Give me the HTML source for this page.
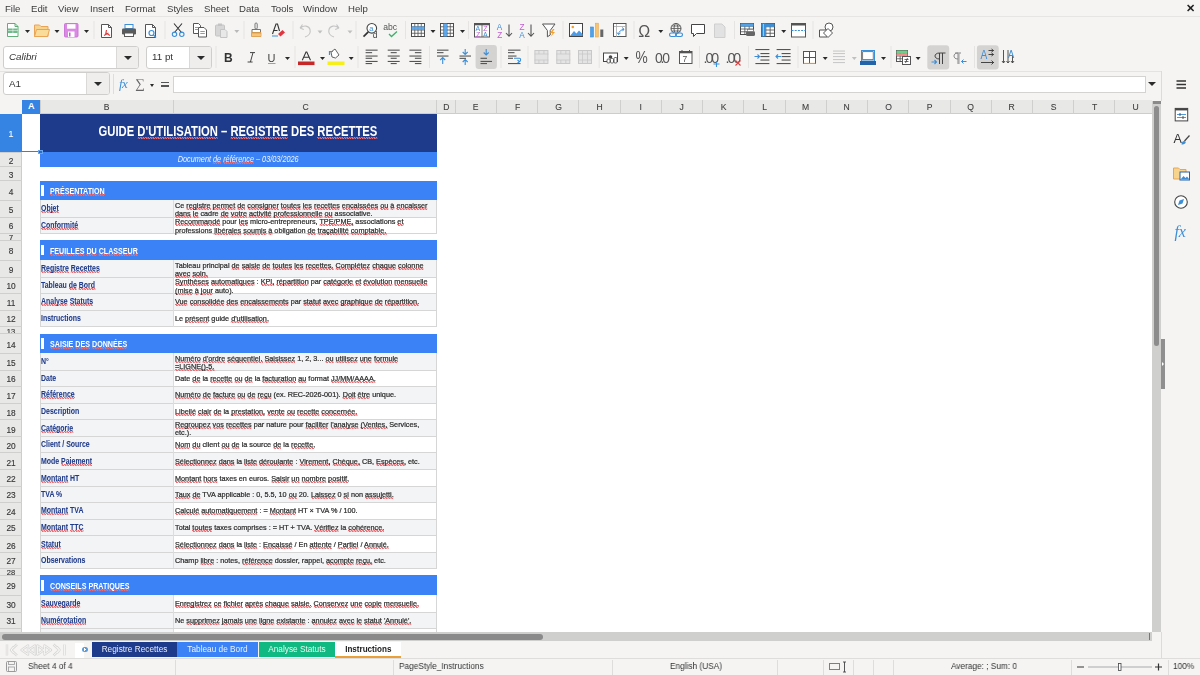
<!DOCTYPE html><html><head><meta charset="utf-8"><style>
*{margin:0;padding:0;box-sizing:border-box}
html,body{width:1200px;height:675px;overflow:hidden;background:#f5f4f3;font-family:"Liberation Sans",sans-serif;position:relative}
.a{position:absolute}
.t{position:absolute;white-space:nowrap;line-height:1;will-change:transform}
.menu{font-size:9.6px;color:#3b3b3b;top:4px}
.sep{position:absolute;width:1px;background:#dedddc}
.box{position:absolute;background:#fff;border:1px solid #cfcecd;border-radius:3px}
u{text-decoration:none;background-image:linear-gradient(45deg,transparent 38%,#ec6a70 38%,#ec6a70 62%,transparent 62%);background-size:3px 2px;background-repeat:repeat-x;background-position:0 100%}
.lab{color:#1e3a8a;font-size:8.2px;font-weight:bold;-webkit-text-stroke:0.05px #1e3a8a}
.lab span,.desc span{display:inline-block;transform-origin:0 0}
.lab span{transform:scaleX(0.85)}
.desc{color:#2a2a2a;font-size:7.7px;-webkit-text-stroke:0.22px #2a2a2a}
.desc span{transform:scaleX(0.945)}
.dd{position:absolute;width:0;height:0;border-left:3.5px solid transparent;border-right:3.5px solid transparent;border-top:4px solid #2b2b2b}
</style></head><body>
<div class="t menu" style="left:5.0px">File</div>
<div class="t menu" style="left:31.2px">Edit</div>
<div class="t menu" style="left:58.2px">View</div>
<div class="t menu" style="left:90.3px">Insert</div>
<div class="t menu" style="left:125.3px">Format</div>
<div class="t menu" style="left:166.7px">Styles</div>
<div class="t menu" style="left:203.7px">Sheet</div>
<div class="t menu" style="left:239.2px">Data</div>
<div class="t menu" style="left:270.7px">Tools</div>
<div class="t menu" style="left:302.8px">Window</div>
<div class="t menu" style="left:347.8px">Help</div>
<div class="a" style="left:0;top:16px;width:1200px;height:1px;background:#e6e5e4"></div>
<div class="t" style="left:1186px;top:3px;font-size:11px;color:#222;font-weight:bold">&#x2715;</div>
<div class="a" style="left:22px;top:113.6px;width:1130px;height:518.4px;background:#fff"></div>
<div class="a" style="left:22px;top:100px;width:1130px;height:13.6px;background:#e8e8e7;border-bottom:1px solid #cdcdcc"></div>
<div class="a" style="left:22px;top:100px;width:18.299999999999997px;height:13.6px;background:#3584e4;color:#fff;font-size:9px;font-weight:bold;text-align:center;line-height:13.6px">A</div>
<div class="a" style="left:40.3px;top:100px;width:133.2px;height:13.6px;color:#404040;font-size:8.6px;text-align:center;line-height:14.1px;will-change:transform;-webkit-text-stroke:0.1px #404040">B</div>
<div class="a" style="left:39.8px;top:100px;width:1px;height:13.6px;background:#cfcfce"></div>
<div class="a" style="left:173.5px;top:100px;width:263.2px;height:13.6px;color:#404040;font-size:8.6px;text-align:center;line-height:14.1px;will-change:transform;-webkit-text-stroke:0.1px #404040">C</div>
<div class="a" style="left:173.0px;top:100px;width:1px;height:13.6px;background:#cfcfce"></div>
<div class="a" style="left:436.7px;top:100px;width:18.600000000000023px;height:13.6px;color:#404040;font-size:8.6px;text-align:center;line-height:14.1px;will-change:transform;-webkit-text-stroke:0.1px #404040">D</div>
<div class="a" style="left:436.2px;top:100px;width:1px;height:13.6px;background:#cfcfce"></div>
<div class="a" style="left:455.3px;top:100px;width:41.23000000000002px;height:13.6px;color:#404040;font-size:8.6px;text-align:center;line-height:14.1px;will-change:transform;-webkit-text-stroke:0.1px #404040">E</div>
<div class="a" style="left:454.8px;top:100px;width:1px;height:13.6px;background:#cfcfce"></div>
<div class="a" style="left:496.53000000000003px;top:100px;width:41.22999999999996px;height:13.6px;color:#404040;font-size:8.6px;text-align:center;line-height:14.1px;will-change:transform;-webkit-text-stroke:0.1px #404040">F</div>
<div class="a" style="left:496.03000000000003px;top:100px;width:1px;height:13.6px;background:#cfcfce"></div>
<div class="a" style="left:537.76px;top:100px;width:41.23000000000002px;height:13.6px;color:#404040;font-size:8.6px;text-align:center;line-height:14.1px;will-change:transform;-webkit-text-stroke:0.1px #404040">G</div>
<div class="a" style="left:537.26px;top:100px;width:1px;height:13.6px;background:#cfcfce"></div>
<div class="a" style="left:578.99px;top:100px;width:41.23000000000002px;height:13.6px;color:#404040;font-size:8.6px;text-align:center;line-height:14.1px;will-change:transform;-webkit-text-stroke:0.1px #404040">H</div>
<div class="a" style="left:578.49px;top:100px;width:1px;height:13.6px;background:#cfcfce"></div>
<div class="a" style="left:620.22px;top:100px;width:41.23000000000002px;height:13.6px;color:#404040;font-size:8.6px;text-align:center;line-height:14.1px;will-change:transform;-webkit-text-stroke:0.1px #404040">I</div>
<div class="a" style="left:619.72px;top:100px;width:1px;height:13.6px;background:#cfcfce"></div>
<div class="a" style="left:661.45px;top:100px;width:41.23000000000002px;height:13.6px;color:#404040;font-size:8.6px;text-align:center;line-height:14.1px;will-change:transform;-webkit-text-stroke:0.1px #404040">J</div>
<div class="a" style="left:660.95px;top:100px;width:1px;height:13.6px;background:#cfcfce"></div>
<div class="a" style="left:702.6800000000001px;top:100px;width:41.23000000000002px;height:13.6px;color:#404040;font-size:8.6px;text-align:center;line-height:14.1px;will-change:transform;-webkit-text-stroke:0.1px #404040">K</div>
<div class="a" style="left:702.1800000000001px;top:100px;width:1px;height:13.6px;background:#cfcfce"></div>
<div class="a" style="left:743.9100000000001px;top:100px;width:41.23000000000002px;height:13.6px;color:#404040;font-size:8.6px;text-align:center;line-height:14.1px;will-change:transform;-webkit-text-stroke:0.1px #404040">L</div>
<div class="a" style="left:743.4100000000001px;top:100px;width:1px;height:13.6px;background:#cfcfce"></div>
<div class="a" style="left:785.1400000000001px;top:100px;width:41.23000000000002px;height:13.6px;color:#404040;font-size:8.6px;text-align:center;line-height:14.1px;will-change:transform;-webkit-text-stroke:0.1px #404040">M</div>
<div class="a" style="left:784.6400000000001px;top:100px;width:1px;height:13.6px;background:#cfcfce"></div>
<div class="a" style="left:826.3700000000001px;top:100px;width:41.23000000000002px;height:13.6px;color:#404040;font-size:8.6px;text-align:center;line-height:14.1px;will-change:transform;-webkit-text-stroke:0.1px #404040">N</div>
<div class="a" style="left:825.8700000000001px;top:100px;width:1px;height:13.6px;background:#cfcfce"></div>
<div class="a" style="left:867.6000000000001px;top:100px;width:41.23000000000002px;height:13.6px;color:#404040;font-size:8.6px;text-align:center;line-height:14.1px;will-change:transform;-webkit-text-stroke:0.1px #404040">O</div>
<div class="a" style="left:867.1000000000001px;top:100px;width:1px;height:13.6px;background:#cfcfce"></div>
<div class="a" style="left:908.8300000000002px;top:100px;width:41.23000000000002px;height:13.6px;color:#404040;font-size:8.6px;text-align:center;line-height:14.1px;will-change:transform;-webkit-text-stroke:0.1px #404040">P</div>
<div class="a" style="left:908.3300000000002px;top:100px;width:1px;height:13.6px;background:#cfcfce"></div>
<div class="a" style="left:950.0600000000002px;top:100px;width:41.23000000000002px;height:13.6px;color:#404040;font-size:8.6px;text-align:center;line-height:14.1px;will-change:transform;-webkit-text-stroke:0.1px #404040">Q</div>
<div class="a" style="left:949.5600000000002px;top:100px;width:1px;height:13.6px;background:#cfcfce"></div>
<div class="a" style="left:991.2900000000002px;top:100px;width:41.23000000000002px;height:13.6px;color:#404040;font-size:8.6px;text-align:center;line-height:14.1px;will-change:transform;-webkit-text-stroke:0.1px #404040">R</div>
<div class="a" style="left:990.7900000000002px;top:100px;width:1px;height:13.6px;background:#cfcfce"></div>
<div class="a" style="left:1032.5200000000002px;top:100px;width:41.23000000000002px;height:13.6px;color:#404040;font-size:8.6px;text-align:center;line-height:14.1px;will-change:transform;-webkit-text-stroke:0.1px #404040">S</div>
<div class="a" style="left:1032.0200000000002px;top:100px;width:1px;height:13.6px;background:#cfcfce"></div>
<div class="a" style="left:1073.7500000000002px;top:100px;width:41.23000000000002px;height:13.6px;color:#404040;font-size:8.6px;text-align:center;line-height:14.1px;will-change:transform;-webkit-text-stroke:0.1px #404040">T</div>
<div class="a" style="left:1073.2500000000002px;top:100px;width:1px;height:13.6px;background:#cfcfce"></div>
<div class="a" style="left:1114.9800000000002px;top:100px;width:41.23000000000002px;height:13.6px;color:#404040;font-size:8.6px;text-align:center;line-height:14.1px;will-change:transform;-webkit-text-stroke:0.1px #404040">U</div>
<div class="a" style="left:1114.4800000000002px;top:100px;width:1px;height:13.6px;background:#cfcfce"></div>
<div class="a" style="left:0;top:113.6px;width:22px;height:518.4px;background:#e8e8e7;border-right:1px solid #cdcdcc"></div>
<div class="a" style="left:0;top:113.6px;width:22px;height:38.400000000000006px;background:#3584e4;color:#fff;font-size:9.6px;text-align:center;line-height:39.900000000000006px;will-change:transform">1</div>
<div class="a" style="left:0;top:152px;width:22px;height:1px;background:#cfcfce"></div>
<div class="a" style="left:0;top:152.0px;width:22px;height:14.800000000000011px;color:#383838;font-size:8.3px;text-align:center;line-height:18.20000000000001px;overflow:hidden;will-change:transform;-webkit-text-stroke:0.15px #383838">2</div>
<div class="a" style="left:0;top:166px;width:22px;height:1px;background:#cfcfce"></div>
<div class="a" style="left:0;top:166.8px;width:22px;height:13.699999999999989px;color:#383838;font-size:8.3px;text-align:center;line-height:17.099999999999987px;overflow:hidden;will-change:transform;-webkit-text-stroke:0.15px #383838">3</div>
<div class="a" style="left:0;top:180px;width:22px;height:1px;background:#cfcfce"></div>
<div class="a" style="left:0;top:180.5px;width:22px;height:19.80000000000001px;color:#383838;font-size:8.3px;text-align:center;line-height:23.20000000000001px;overflow:hidden;will-change:transform;-webkit-text-stroke:0.15px #383838">4</div>
<div class="a" style="left:0;top:200px;width:22px;height:1px;background:#cfcfce"></div>
<div class="a" style="left:0;top:200.3px;width:22px;height:16.69999999999999px;color:#383838;font-size:8.3px;text-align:center;line-height:20.099999999999987px;overflow:hidden;will-change:transform;-webkit-text-stroke:0.15px #383838">5</div>
<div class="a" style="left:0;top:217px;width:22px;height:1px;background:#cfcfce"></div>
<div class="a" style="left:0;top:217px;width:22px;height:16.30000000000001px;color:#383838;font-size:8.3px;text-align:center;line-height:19.70000000000001px;overflow:hidden;will-change:transform;-webkit-text-stroke:0.15px #383838">6</div>
<div class="a" style="left:0;top:233px;width:22px;height:1px;background:#cfcfce"></div>
<div class="a" style="left:0;top:233.3px;width:22px;height:7.0px;color:#383838;font-size:7.5px;text-align:center;line-height:10.4px;overflow:hidden;will-change:transform;-webkit-text-stroke:0.15px #383838">7</div>
<div class="a" style="left:0;top:240px;width:22px;height:1px;background:#cfcfce"></div>
<div class="a" style="left:0;top:240.3px;width:22px;height:20.0px;color:#383838;font-size:8.3px;text-align:center;line-height:23.4px;overflow:hidden;will-change:transform;-webkit-text-stroke:0.15px #383838">8</div>
<div class="a" style="left:0;top:260px;width:22px;height:1px;background:#cfcfce"></div>
<div class="a" style="left:0;top:260.3px;width:22px;height:16.69999999999999px;color:#383838;font-size:8.3px;text-align:center;line-height:20.099999999999987px;overflow:hidden;will-change:transform;-webkit-text-stroke:0.15px #383838">9</div>
<div class="a" style="left:0;top:277px;width:22px;height:1px;background:#cfcfce"></div>
<div class="a" style="left:0;top:277px;width:22px;height:16.30000000000001px;color:#383838;font-size:8.3px;text-align:center;line-height:19.70000000000001px;overflow:hidden;will-change:transform;-webkit-text-stroke:0.15px #383838">10</div>
<div class="a" style="left:0;top:293px;width:22px;height:1px;background:#cfcfce"></div>
<div class="a" style="left:0;top:293.3px;width:22px;height:17.0px;color:#383838;font-size:8.3px;text-align:center;line-height:20.4px;overflow:hidden;will-change:transform;-webkit-text-stroke:0.15px #383838">11</div>
<div class="a" style="left:0;top:310px;width:22px;height:1px;background:#cfcfce"></div>
<div class="a" style="left:0;top:310.3px;width:22px;height:16.399999999999977px;color:#383838;font-size:8.3px;text-align:center;line-height:19.799999999999976px;overflow:hidden;will-change:transform;-webkit-text-stroke:0.15px #383838">12</div>
<div class="a" style="left:0;top:326px;width:22px;height:1px;background:#cfcfce"></div>
<div class="a" style="left:0;top:326.7px;width:22px;height:6.800000000000011px;color:#383838;font-size:7.5px;text-align:center;line-height:10.200000000000012px;overflow:hidden;will-change:transform;-webkit-text-stroke:0.15px #383838">13</div>
<div class="a" style="left:0;top:333px;width:22px;height:1px;background:#cfcfce"></div>
<div class="a" style="left:0;top:333.5px;width:22px;height:19.899999999999977px;color:#383838;font-size:8.3px;text-align:center;line-height:23.299999999999976px;overflow:hidden;will-change:transform;-webkit-text-stroke:0.15px #383838">14</div>
<div class="a" style="left:0;top:353px;width:22px;height:1px;background:#cfcfce"></div>
<div class="a" style="left:0;top:353.4px;width:22px;height:16.80000000000001px;color:#383838;font-size:8.3px;text-align:center;line-height:20.20000000000001px;overflow:hidden;will-change:transform;-webkit-text-stroke:0.15px #383838">15</div>
<div class="a" style="left:0;top:370px;width:22px;height:1px;background:#cfcfce"></div>
<div class="a" style="left:0;top:370.2px;width:22px;height:16.30000000000001px;color:#383838;font-size:8.3px;text-align:center;line-height:19.70000000000001px;overflow:hidden;will-change:transform;-webkit-text-stroke:0.15px #383838">16</div>
<div class="a" style="left:0;top:386px;width:22px;height:1px;background:#cfcfce"></div>
<div class="a" style="left:0;top:386.5px;width:22px;height:16.5px;color:#383838;font-size:8.3px;text-align:center;line-height:19.9px;overflow:hidden;will-change:transform;-webkit-text-stroke:0.15px #383838">17</div>
<div class="a" style="left:0;top:403px;width:22px;height:1px;background:#cfcfce"></div>
<div class="a" style="left:0;top:403px;width:22px;height:16.600000000000023px;color:#383838;font-size:8.3px;text-align:center;line-height:20.00000000000002px;overflow:hidden;will-change:transform;-webkit-text-stroke:0.15px #383838">18</div>
<div class="a" style="left:0;top:419px;width:22px;height:1px;background:#cfcfce"></div>
<div class="a" style="left:0;top:419.6px;width:22px;height:16.899999999999977px;color:#383838;font-size:8.3px;text-align:center;line-height:20.299999999999976px;overflow:hidden;will-change:transform;-webkit-text-stroke:0.15px #383838">19</div>
<div class="a" style="left:0;top:436px;width:22px;height:1px;background:#cfcfce"></div>
<div class="a" style="left:0;top:436.5px;width:22px;height:16.30000000000001px;color:#383838;font-size:8.3px;text-align:center;line-height:19.70000000000001px;overflow:hidden;will-change:transform;-webkit-text-stroke:0.15px #383838">20</div>
<div class="a" style="left:0;top:452px;width:22px;height:1px;background:#cfcfce"></div>
<div class="a" style="left:0;top:452.8px;width:22px;height:16.899999999999977px;color:#383838;font-size:8.3px;text-align:center;line-height:20.299999999999976px;overflow:hidden;will-change:transform;-webkit-text-stroke:0.15px #383838">21</div>
<div class="a" style="left:0;top:469px;width:22px;height:1px;background:#cfcfce"></div>
<div class="a" style="left:0;top:469.7px;width:22px;height:16.5px;color:#383838;font-size:8.3px;text-align:center;line-height:19.9px;overflow:hidden;will-change:transform;-webkit-text-stroke:0.15px #383838">22</div>
<div class="a" style="left:0;top:486px;width:22px;height:1px;background:#cfcfce"></div>
<div class="a" style="left:0;top:486.2px;width:22px;height:16.400000000000034px;color:#383838;font-size:8.3px;text-align:center;line-height:19.800000000000033px;overflow:hidden;will-change:transform;-webkit-text-stroke:0.15px #383838">23</div>
<div class="a" style="left:0;top:502px;width:22px;height:1px;background:#cfcfce"></div>
<div class="a" style="left:0;top:502.6px;width:22px;height:16.5px;color:#383838;font-size:8.3px;text-align:center;line-height:19.9px;overflow:hidden;will-change:transform;-webkit-text-stroke:0.15px #383838">24</div>
<div class="a" style="left:0;top:519px;width:22px;height:1px;background:#cfcfce"></div>
<div class="a" style="left:0;top:519.1px;width:22px;height:16.5px;color:#383838;font-size:8.3px;text-align:center;line-height:19.9px;overflow:hidden;will-change:transform;-webkit-text-stroke:0.15px #383838">25</div>
<div class="a" style="left:0;top:535px;width:22px;height:1px;background:#cfcfce"></div>
<div class="a" style="left:0;top:535.6px;width:22px;height:16.600000000000023px;color:#383838;font-size:8.3px;text-align:center;line-height:20.00000000000002px;overflow:hidden;will-change:transform;-webkit-text-stroke:0.15px #383838">26</div>
<div class="a" style="left:0;top:552px;width:22px;height:1px;background:#cfcfce"></div>
<div class="a" style="left:0;top:552.2px;width:22px;height:16.199999999999932px;color:#383838;font-size:8.3px;text-align:center;line-height:19.59999999999993px;overflow:hidden;will-change:transform;-webkit-text-stroke:0.15px #383838">27</div>
<div class="a" style="left:0;top:568px;width:22px;height:1px;background:#cfcfce"></div>
<div class="a" style="left:0;top:568.4px;width:22px;height:7.0px;color:#383838;font-size:7.5px;text-align:center;line-height:10.4px;overflow:hidden;will-change:transform;-webkit-text-stroke:0.15px #383838">28</div>
<div class="a" style="left:0;top:575px;width:22px;height:1px;background:#cfcfce"></div>
<div class="a" style="left:0;top:575.4px;width:22px;height:19.899999999999977px;color:#383838;font-size:8.3px;text-align:center;line-height:23.299999999999976px;overflow:hidden;will-change:transform;-webkit-text-stroke:0.15px #383838">29</div>
<div class="a" style="left:0;top:595px;width:22px;height:1px;background:#cfcfce"></div>
<div class="a" style="left:0;top:595.3px;width:22px;height:16.90000000000009px;color:#383838;font-size:8.3px;text-align:center;line-height:20.30000000000009px;overflow:hidden;will-change:transform;-webkit-text-stroke:0.15px #383838">30</div>
<div class="a" style="left:0;top:612px;width:22px;height:1px;background:#cfcfce"></div>
<div class="a" style="left:0;top:612.2px;width:22px;height:16.299999999999955px;color:#383838;font-size:8.3px;text-align:center;line-height:19.699999999999953px;overflow:hidden;will-change:transform;-webkit-text-stroke:0.15px #383838">31</div>
<div class="a" style="left:0;top:628px;width:22px;height:1px;background:#cfcfce"></div>
<div class="a" style="left:0;top:628.5px;width:22px;height:16.5px;color:#383838;font-size:8.3px;text-align:center;line-height:19.9px;overflow:hidden;will-change:transform;-webkit-text-stroke:0.15px #383838">32</div>
<div class="a" style="left:0;top:645px;width:22px;height:1px;background:#cfcfce"></div>
<div class="a" style="left:40.3px;top:113.6px;width:396.4px;height:39.00000000000001px;background:#1e3a8a"></div>
<div class="t" style="left:40.3px;width:396.4px;top:125.19999999999999px;text-align:center;color:#fff;font-size:13.8px;font-weight:bold"><span style="display:inline-block;transform:scaleX(0.815)">GUIDE <u>D&#39;UTILISATION</u> – <u>REGISTRE</u> DES <u>RECETTES</u></span></div>
<div class="a" style="left:40.3px;top:152.0px;width:396.4px;height:15.100000000000012px;background:#3b82f6"></div>
<div class="t" style="left:40.3px;width:396.4px;top:153.9px;text-align:center;color:#eef3ff;font-size:9.8px;font-style:italic"><span style="display:inline-block;transform:scaleX(0.745)">Document <u>de</u> <u>référence</u> – 03/03/2026</span></div>
<div class="a" style="left:39.599999999999994px;top:180.5px;width:397.09999999999997px;height:19.80000000000001px;background:#3b82f6"></div>
<div class="a" style="left:41.3px;top:185.1px;width:3.1px;height:10.6px;background:#fff"></div>
<div class="t" style="left:50px;top:187.1px;color:#fff;font-size:8.7px;font-weight:bold"><span style="display:inline-block;transform:scaleX(0.82);transform-origin:0 0"><u>PRÉSENTATION</u></span></div>
<div class="a" style="left:39.599999999999994px;top:240.3px;width:397.09999999999997px;height:20.0px;background:#3b82f6"></div>
<div class="a" style="left:41.3px;top:244.9px;width:3.1px;height:10.6px;background:#fff"></div>
<div class="t" style="left:50px;top:246.9px;color:#fff;font-size:8.7px;font-weight:bold"><span style="display:inline-block;transform:scaleX(0.82);transform-origin:0 0"><u>FEUILLES</u> <u>DU</u> <u>CLASSEUR</u></span></div>
<div class="a" style="left:39.599999999999994px;top:333.5px;width:397.09999999999997px;height:19.899999999999977px;background:#3b82f6"></div>
<div class="a" style="left:41.3px;top:338.1px;width:3.1px;height:10.6px;background:#fff"></div>
<div class="t" style="left:50px;top:340.1px;color:#fff;font-size:8.7px;font-weight:bold"><span style="display:inline-block;transform:scaleX(0.82);transform-origin:0 0"><u>SAISIE</u> <u>DES</u> <u>DONNÉES</u></span></div>
<div class="a" style="left:39.599999999999994px;top:575.4px;width:397.09999999999997px;height:19.899999999999977px;background:#3b82f6"></div>
<div class="a" style="left:41.3px;top:580.0px;width:3.1px;height:10.6px;background:#fff"></div>
<div class="t" style="left:50px;top:582.0px;color:#fff;font-size:8.7px;font-weight:bold"><span style="display:inline-block;transform:scaleX(0.82);transform-origin:0 0"><u>CONSEILS</u> <u>PRATIQUES</u></span></div>
<div class="a" style="left:39.599999999999994px;top:200.3px;width:133.89999999999998px;height:16.69999999999999px;background:#f3f4f6"></div>
<div class="a" style="left:173.5px;top:200.3px;width:263.2px;height:16.69999999999999px;background:#f3f4f6"></div>
<div class="a" style="left:39.599999999999994px;top:217px;width:133.89999999999998px;height:16.30000000000001px;background:#f3f4f6"></div>
<div class="a" style="left:173.5px;top:217px;width:263.2px;height:16.30000000000001px;background:#ffffff"></div>
<div class="a" style="left:39.599999999999994px;top:260.3px;width:133.89999999999998px;height:16.69999999999999px;background:#f3f4f6"></div>
<div class="a" style="left:173.5px;top:260.3px;width:263.2px;height:16.69999999999999px;background:#f3f4f6"></div>
<div class="a" style="left:39.599999999999994px;top:277px;width:133.89999999999998px;height:16.30000000000001px;background:#f3f4f6"></div>
<div class="a" style="left:173.5px;top:277px;width:263.2px;height:16.30000000000001px;background:#ffffff"></div>
<div class="a" style="left:39.599999999999994px;top:293.3px;width:133.89999999999998px;height:17.0px;background:#f3f4f6"></div>
<div class="a" style="left:173.5px;top:293.3px;width:263.2px;height:17.0px;background:#f3f4f6"></div>
<div class="a" style="left:39.599999999999994px;top:310.3px;width:133.89999999999998px;height:16.399999999999977px;background:#f3f4f6"></div>
<div class="a" style="left:173.5px;top:310.3px;width:263.2px;height:16.399999999999977px;background:#ffffff"></div>
<div class="a" style="left:39.599999999999994px;top:353.4px;width:133.89999999999998px;height:16.80000000000001px;background:#f3f4f6"></div>
<div class="a" style="left:173.5px;top:353.4px;width:263.2px;height:16.80000000000001px;background:#f3f4f6"></div>
<div class="a" style="left:39.599999999999994px;top:370.2px;width:133.89999999999998px;height:16.30000000000001px;background:#f3f4f6"></div>
<div class="a" style="left:173.5px;top:370.2px;width:263.2px;height:16.30000000000001px;background:#ffffff"></div>
<div class="a" style="left:39.599999999999994px;top:386.5px;width:133.89999999999998px;height:16.5px;background:#f3f4f6"></div>
<div class="a" style="left:173.5px;top:386.5px;width:263.2px;height:16.5px;background:#f3f4f6"></div>
<div class="a" style="left:39.599999999999994px;top:403px;width:133.89999999999998px;height:16.600000000000023px;background:#f3f4f6"></div>
<div class="a" style="left:173.5px;top:403px;width:263.2px;height:16.600000000000023px;background:#ffffff"></div>
<div class="a" style="left:39.599999999999994px;top:419.6px;width:133.89999999999998px;height:16.899999999999977px;background:#f3f4f6"></div>
<div class="a" style="left:173.5px;top:419.6px;width:263.2px;height:16.899999999999977px;background:#f3f4f6"></div>
<div class="a" style="left:39.599999999999994px;top:436.5px;width:133.89999999999998px;height:16.30000000000001px;background:#f3f4f6"></div>
<div class="a" style="left:173.5px;top:436.5px;width:263.2px;height:16.30000000000001px;background:#ffffff"></div>
<div class="a" style="left:39.599999999999994px;top:452.8px;width:133.89999999999998px;height:16.899999999999977px;background:#f3f4f6"></div>
<div class="a" style="left:173.5px;top:452.8px;width:263.2px;height:16.899999999999977px;background:#f3f4f6"></div>
<div class="a" style="left:39.599999999999994px;top:469.7px;width:133.89999999999998px;height:16.5px;background:#f3f4f6"></div>
<div class="a" style="left:173.5px;top:469.7px;width:263.2px;height:16.5px;background:#ffffff"></div>
<div class="a" style="left:39.599999999999994px;top:486.2px;width:133.89999999999998px;height:16.400000000000034px;background:#f3f4f6"></div>
<div class="a" style="left:173.5px;top:486.2px;width:263.2px;height:16.400000000000034px;background:#f3f4f6"></div>
<div class="a" style="left:39.599999999999994px;top:502.6px;width:133.89999999999998px;height:16.5px;background:#f3f4f6"></div>
<div class="a" style="left:173.5px;top:502.6px;width:263.2px;height:16.5px;background:#ffffff"></div>
<div class="a" style="left:39.599999999999994px;top:519.1px;width:133.89999999999998px;height:16.5px;background:#f3f4f6"></div>
<div class="a" style="left:173.5px;top:519.1px;width:263.2px;height:16.5px;background:#f3f4f6"></div>
<div class="a" style="left:39.599999999999994px;top:535.6px;width:133.89999999999998px;height:16.600000000000023px;background:#f3f4f6"></div>
<div class="a" style="left:173.5px;top:535.6px;width:263.2px;height:16.600000000000023px;background:#ffffff"></div>
<div class="a" style="left:39.599999999999994px;top:552.2px;width:133.89999999999998px;height:16.199999999999932px;background:#f3f4f6"></div>
<div class="a" style="left:173.5px;top:552.2px;width:263.2px;height:16.199999999999932px;background:#f3f4f6"></div>
<div class="a" style="left:39.599999999999994px;top:595.3px;width:133.89999999999998px;height:16.90000000000009px;background:#f3f4f6"></div>
<div class="a" style="left:173.5px;top:595.3px;width:263.2px;height:16.90000000000009px;background:#ffffff"></div>
<div class="a" style="left:39.599999999999994px;top:612.2px;width:133.89999999999998px;height:16.299999999999955px;background:#f3f4f6"></div>
<div class="a" style="left:173.5px;top:612.2px;width:263.2px;height:16.299999999999955px;background:#f3f4f6"></div>
<div class="a" style="left:39.599999999999994px;top:628.5px;width:133.89999999999998px;height:16.5px;background:#f3f4f6"></div>
<div class="a" style="left:173.5px;top:628.5px;width:263.2px;height:16.5px;background:#ffffff"></div>
<div class="a" style="left:39.8px;top:217px;width:396.9px;height:1px;background:#d6d6d6"></div>
<div class="a" style="left:39.599999999999994px;top:200.3px;width:1px;height:16.69999999999999px;background:#d6d6d6"></div>
<div class="a" style="left:173.0px;top:200.3px;width:1px;height:16.69999999999999px;background:#dddddd"></div>
<div class="a" style="left:436.2px;top:200.3px;width:1px;height:16.69999999999999px;background:#d6d6d6"></div>
<div class="a" style="left:39.8px;top:233px;width:396.9px;height:1px;background:#d6d6d6"></div>
<div class="a" style="left:39.599999999999994px;top:217px;width:1px;height:16.30000000000001px;background:#d6d6d6"></div>
<div class="a" style="left:173.0px;top:217px;width:1px;height:16.30000000000001px;background:#dddddd"></div>
<div class="a" style="left:436.2px;top:217px;width:1px;height:16.30000000000001px;background:#d6d6d6"></div>
<div class="a" style="left:39.8px;top:277px;width:396.9px;height:1px;background:#d6d6d6"></div>
<div class="a" style="left:39.599999999999994px;top:260.3px;width:1px;height:16.69999999999999px;background:#d6d6d6"></div>
<div class="a" style="left:173.0px;top:260.3px;width:1px;height:16.69999999999999px;background:#dddddd"></div>
<div class="a" style="left:436.2px;top:260.3px;width:1px;height:16.69999999999999px;background:#d6d6d6"></div>
<div class="a" style="left:39.8px;top:293px;width:396.9px;height:1px;background:#d6d6d6"></div>
<div class="a" style="left:39.599999999999994px;top:277px;width:1px;height:16.30000000000001px;background:#d6d6d6"></div>
<div class="a" style="left:173.0px;top:277px;width:1px;height:16.30000000000001px;background:#dddddd"></div>
<div class="a" style="left:436.2px;top:277px;width:1px;height:16.30000000000001px;background:#d6d6d6"></div>
<div class="a" style="left:39.8px;top:310px;width:396.9px;height:1px;background:#d6d6d6"></div>
<div class="a" style="left:39.599999999999994px;top:293.3px;width:1px;height:17.0px;background:#d6d6d6"></div>
<div class="a" style="left:173.0px;top:293.3px;width:1px;height:17.0px;background:#dddddd"></div>
<div class="a" style="left:436.2px;top:293.3px;width:1px;height:17.0px;background:#d6d6d6"></div>
<div class="a" style="left:39.8px;top:326px;width:396.9px;height:1px;background:#d6d6d6"></div>
<div class="a" style="left:39.599999999999994px;top:310.3px;width:1px;height:16.399999999999977px;background:#d6d6d6"></div>
<div class="a" style="left:173.0px;top:310.3px;width:1px;height:16.399999999999977px;background:#dddddd"></div>
<div class="a" style="left:436.2px;top:310.3px;width:1px;height:16.399999999999977px;background:#d6d6d6"></div>
<div class="a" style="left:39.8px;top:370px;width:396.9px;height:1px;background:#d6d6d6"></div>
<div class="a" style="left:39.599999999999994px;top:353.4px;width:1px;height:16.80000000000001px;background:#d6d6d6"></div>
<div class="a" style="left:173.0px;top:353.4px;width:1px;height:16.80000000000001px;background:#dddddd"></div>
<div class="a" style="left:436.2px;top:353.4px;width:1px;height:16.80000000000001px;background:#d6d6d6"></div>
<div class="a" style="left:39.8px;top:386px;width:396.9px;height:1px;background:#d6d6d6"></div>
<div class="a" style="left:39.599999999999994px;top:370.2px;width:1px;height:16.30000000000001px;background:#d6d6d6"></div>
<div class="a" style="left:173.0px;top:370.2px;width:1px;height:16.30000000000001px;background:#dddddd"></div>
<div class="a" style="left:436.2px;top:370.2px;width:1px;height:16.30000000000001px;background:#d6d6d6"></div>
<div class="a" style="left:39.8px;top:403px;width:396.9px;height:1px;background:#d6d6d6"></div>
<div class="a" style="left:39.599999999999994px;top:386.5px;width:1px;height:16.5px;background:#d6d6d6"></div>
<div class="a" style="left:173.0px;top:386.5px;width:1px;height:16.5px;background:#dddddd"></div>
<div class="a" style="left:436.2px;top:386.5px;width:1px;height:16.5px;background:#d6d6d6"></div>
<div class="a" style="left:39.8px;top:419px;width:396.9px;height:1px;background:#d6d6d6"></div>
<div class="a" style="left:39.599999999999994px;top:403px;width:1px;height:16.600000000000023px;background:#d6d6d6"></div>
<div class="a" style="left:173.0px;top:403px;width:1px;height:16.600000000000023px;background:#dddddd"></div>
<div class="a" style="left:436.2px;top:403px;width:1px;height:16.600000000000023px;background:#d6d6d6"></div>
<div class="a" style="left:39.8px;top:436px;width:396.9px;height:1px;background:#d6d6d6"></div>
<div class="a" style="left:39.599999999999994px;top:419.6px;width:1px;height:16.899999999999977px;background:#d6d6d6"></div>
<div class="a" style="left:173.0px;top:419.6px;width:1px;height:16.899999999999977px;background:#dddddd"></div>
<div class="a" style="left:436.2px;top:419.6px;width:1px;height:16.899999999999977px;background:#d6d6d6"></div>
<div class="a" style="left:39.8px;top:452px;width:396.9px;height:1px;background:#d6d6d6"></div>
<div class="a" style="left:39.599999999999994px;top:436.5px;width:1px;height:16.30000000000001px;background:#d6d6d6"></div>
<div class="a" style="left:173.0px;top:436.5px;width:1px;height:16.30000000000001px;background:#dddddd"></div>
<div class="a" style="left:436.2px;top:436.5px;width:1px;height:16.30000000000001px;background:#d6d6d6"></div>
<div class="a" style="left:39.8px;top:469px;width:396.9px;height:1px;background:#d6d6d6"></div>
<div class="a" style="left:39.599999999999994px;top:452.8px;width:1px;height:16.899999999999977px;background:#d6d6d6"></div>
<div class="a" style="left:173.0px;top:452.8px;width:1px;height:16.899999999999977px;background:#dddddd"></div>
<div class="a" style="left:436.2px;top:452.8px;width:1px;height:16.899999999999977px;background:#d6d6d6"></div>
<div class="a" style="left:39.8px;top:486px;width:396.9px;height:1px;background:#d6d6d6"></div>
<div class="a" style="left:39.599999999999994px;top:469.7px;width:1px;height:16.5px;background:#d6d6d6"></div>
<div class="a" style="left:173.0px;top:469.7px;width:1px;height:16.5px;background:#dddddd"></div>
<div class="a" style="left:436.2px;top:469.7px;width:1px;height:16.5px;background:#d6d6d6"></div>
<div class="a" style="left:39.8px;top:502px;width:396.9px;height:1px;background:#d6d6d6"></div>
<div class="a" style="left:39.599999999999994px;top:486.2px;width:1px;height:16.400000000000034px;background:#d6d6d6"></div>
<div class="a" style="left:173.0px;top:486.2px;width:1px;height:16.400000000000034px;background:#dddddd"></div>
<div class="a" style="left:436.2px;top:486.2px;width:1px;height:16.400000000000034px;background:#d6d6d6"></div>
<div class="a" style="left:39.8px;top:519px;width:396.9px;height:1px;background:#d6d6d6"></div>
<div class="a" style="left:39.599999999999994px;top:502.6px;width:1px;height:16.5px;background:#d6d6d6"></div>
<div class="a" style="left:173.0px;top:502.6px;width:1px;height:16.5px;background:#dddddd"></div>
<div class="a" style="left:436.2px;top:502.6px;width:1px;height:16.5px;background:#d6d6d6"></div>
<div class="a" style="left:39.8px;top:535px;width:396.9px;height:1px;background:#d6d6d6"></div>
<div class="a" style="left:39.599999999999994px;top:519.1px;width:1px;height:16.5px;background:#d6d6d6"></div>
<div class="a" style="left:173.0px;top:519.1px;width:1px;height:16.5px;background:#dddddd"></div>
<div class="a" style="left:436.2px;top:519.1px;width:1px;height:16.5px;background:#d6d6d6"></div>
<div class="a" style="left:39.8px;top:552px;width:396.9px;height:1px;background:#d6d6d6"></div>
<div class="a" style="left:39.599999999999994px;top:535.6px;width:1px;height:16.600000000000023px;background:#d6d6d6"></div>
<div class="a" style="left:173.0px;top:535.6px;width:1px;height:16.600000000000023px;background:#dddddd"></div>
<div class="a" style="left:436.2px;top:535.6px;width:1px;height:16.600000000000023px;background:#d6d6d6"></div>
<div class="a" style="left:39.8px;top:568px;width:396.9px;height:1px;background:#d6d6d6"></div>
<div class="a" style="left:39.599999999999994px;top:552.2px;width:1px;height:16.199999999999932px;background:#d6d6d6"></div>
<div class="a" style="left:173.0px;top:552.2px;width:1px;height:16.199999999999932px;background:#dddddd"></div>
<div class="a" style="left:436.2px;top:552.2px;width:1px;height:16.199999999999932px;background:#d6d6d6"></div>
<div class="a" style="left:39.8px;top:612px;width:396.9px;height:1px;background:#d6d6d6"></div>
<div class="a" style="left:39.599999999999994px;top:595.3px;width:1px;height:16.90000000000009px;background:#d6d6d6"></div>
<div class="a" style="left:173.0px;top:595.3px;width:1px;height:16.90000000000009px;background:#dddddd"></div>
<div class="a" style="left:436.2px;top:595.3px;width:1px;height:16.90000000000009px;background:#d6d6d6"></div>
<div class="a" style="left:39.8px;top:628px;width:396.9px;height:1px;background:#d6d6d6"></div>
<div class="a" style="left:39.599999999999994px;top:612.2px;width:1px;height:16.299999999999955px;background:#d6d6d6"></div>
<div class="a" style="left:173.0px;top:612.2px;width:1px;height:16.299999999999955px;background:#dddddd"></div>
<div class="a" style="left:436.2px;top:612.2px;width:1px;height:16.299999999999955px;background:#d6d6d6"></div>
<div class="a" style="left:39.8px;top:645px;width:396.9px;height:1px;background:#d6d6d6"></div>
<div class="a" style="left:39.599999999999994px;top:628.5px;width:1px;height:16.5px;background:#d6d6d6"></div>
<div class="a" style="left:173.0px;top:628.5px;width:1px;height:16.5px;background:#dddddd"></div>
<div class="a" style="left:436.2px;top:628.5px;width:1px;height:16.5px;background:#d6d6d6"></div>
<div class="t lab" style="left:41.3px;top:205.25px"><span><u>Objet</u></span></div>
<div class="t desc" style="left:175px;top:201.5px"><span>Ce <u>registre</u> <u>permet</u> <u>de</u> <u>consigner</u> <u>toutes</u> <u>les</u> <u>recettes</u> <u>encaissées</u> <u>ou</u> <u>à</u> <u>encaisser</u></span></div>
<div class="t desc" style="left:175px;top:210.0px"><span><u>dans</u> <u>le</u> cadre <u>de</u> <u>votre</u> <u>activité</u> <u>professionnelle</u> <u>ou</u> associative.</span></div>
<div class="t lab" style="left:41.3px;top:221.75px"><span><u>Conformité</u></span></div>
<div class="t desc" style="left:175px;top:218.2px"><span><u>Recommandé</u> pour <u>les</u> micro-entrepreneurs, <u>TPE/PME,</u> associations <u>et</u></span></div>
<div class="t desc" style="left:175px;top:226.7px"><span>professions <u>libérales</u> <u>soumis</u> <u>à</u> obligation <u>de</u> <u>traçabilité</u> <u>comptable.</u></span></div>
<div class="t lab" style="left:41.3px;top:265.25px"><span><u>Registre</u> <u>Recettes</u></span></div>
<div class="t desc" style="left:175px;top:261.5px"><span>Tableau principal <u>de</u> <u>saisie</u> <u>de</u> <u>toutes</u> <u>les</u> <u>recettes.</u> <u>Complétez</u> <u>chaque</u> <u>colonne</u></span></div>
<div class="t desc" style="left:175px;top:270.0px"><span><u>avec</u> <u>soin.</u></span></div>
<div class="t lab" style="left:41.3px;top:281.75px"><span>Tableau <u>de</u> <u>Bord</u></span></div>
<div class="t desc" style="left:175px;top:278.2px"><span><u>Synthèses</u> <u>automatiques</u> : <u>KPI,</u> <u>répartition</u> par <u>catégorie</u> <u>et</u> <u>évolution</u> <u>mensuelle</u></span></div>
<div class="t desc" style="left:175px;top:286.7px"><span><u>(mise</u> <u>à</u> <u>jour</u> auto).</span></div>
<div class="t lab" style="left:41.3px;top:298.40000000000003px"><span><u>Analyse</u> <u>Statuts</u></span></div>
<div class="t desc" style="left:175px;top:298.40000000000003px"><span><u>Vue</u> <u>consolidée</u> <u>des</u> <u>encaissements</u> par <u>statut</u> <u>avec</u> <u>graphique</u> <u>de</u> <u>répartition.</u></span></div>
<div class="t lab" style="left:41.3px;top:315.1px"><span>Instructions</span></div>
<div class="t desc" style="left:175px;top:315.1px"><span>Le <u>présent</u> guide <u>d&#39;utilisation.</u></span></div>
<div class="t lab" style="left:41.3px;top:358.4px"><span>N°</span></div>
<div class="t desc" style="left:175px;top:354.59999999999997px"><span><u>Numéro</u> <u>d&#39;ordre</u> <u>séquentiel.</u> <u>Saisissez</u> 1, 2, 3... <u>ou</u> <u>utilisez</u> <u>une</u> <u>formule</u></span></div>
<div class="t desc" style="left:175px;top:363.09999999999997px"><span><u>=LIGNE()-5.</u></span></div>
<div class="t lab" style="left:41.3px;top:374.95000000000005px"><span>Date</span></div>
<div class="t desc" style="left:175px;top:374.95000000000005px"><span>Date <u>de</u> la <u>recette</u> <u>ou</u> <u>de</u> la <u>facturation</u> <u>au</u> format <u>JJ/MM/AAAA.</u></span></div>
<div class="t lab" style="left:41.3px;top:391.35px"><span><u>Référence</u></span></div>
<div class="t desc" style="left:175px;top:391.35px"><span><u>Numéro</u> <u>de</u> <u>facture</u> <u>ou</u> <u>de</u> <u>reçu</u> (ex. REC-2026-001). <u>Doit</u> <u>être</u> unique.</span></div>
<div class="t lab" style="left:41.3px;top:407.90000000000003px"><span>Description</span></div>
<div class="t desc" style="left:175px;top:407.90000000000003px"><span><u>Libellé</u> <u>clair</u> <u>de</u> la <u>prestation,</u> <u>vente</u> <u>ou</u> <u>recette</u> <u>concernée.</u></span></div>
<div class="t lab" style="left:41.3px;top:424.65000000000003px"><span><u>Catégorie</u></span></div>
<div class="t desc" style="left:175px;top:420.8px"><span><u>Regroupez</u> <u>vos</u> <u>recettes</u> par nature pour <u>faciliter</u> <u>l&#39;analyse</u> <u>(Ventes,</u> Services,</span></div>
<div class="t desc" style="left:175px;top:429.3px"><span>etc.).</span></div>
<div class="t lab" style="left:41.3px;top:441.25px"><span>Client / Source</span></div>
<div class="t desc" style="left:175px;top:441.25px"><span><u>Nom</u> <u>du</u> client <u>ou</u> <u>de</u> la source <u>de</u> la <u>recette.</u></span></div>
<div class="t lab" style="left:41.3px;top:457.85px"><span>Mode <u>Paiement</u></span></div>
<div class="t desc" style="left:175px;top:457.85px"><span><u>Sélectionnez</u> <u>dans</u> la <u>liste</u> <u>déroulante</u> : <u>Virement,</u> <u>Chèque,</u> CB, <u>Espèces,</u> etc.</span></div>
<div class="t lab" style="left:41.3px;top:474.55px"><span><u>Montant</u> HT</span></div>
<div class="t desc" style="left:175px;top:474.55px"><span><u>Montant</u> <u>hors</u> taxes en euros. <u>Saisir</u> <u>un</u> <u>nombre</u> <u>positif.</u></span></div>
<div class="t lab" style="left:41.3px;top:491.0px"><span>TVA %</span></div>
<div class="t desc" style="left:175px;top:491.0px"><span><u>Taux</u> <u>de</u> TVA applicable : 0, 5.5, 10 <u>ou</u> 20. <u>Laissez</u> 0 <u>si</u> non <u>assujetti.</u></span></div>
<div class="t lab" style="left:41.3px;top:507.45000000000005px"><span><u>Montant</u> TVA</span></div>
<div class="t desc" style="left:175px;top:507.45000000000005px"><span><u>Calculé</u> <u>automatiquement</u> : = <u>Montant</u> HT × TVA % / 100.</span></div>
<div class="t lab" style="left:41.3px;top:523.95px"><span><u>Montant</u> <u>TTC</u></span></div>
<div class="t desc" style="left:175px;top:523.95px"><span>Total <u>toutes</u> taxes comprises : = HT + TVA. <u>Vérifiez</u> la <u>cohérence.</u></span></div>
<div class="t lab" style="left:41.3px;top:540.5000000000001px"><span><u>Statut</u></span></div>
<div class="t desc" style="left:175px;top:540.5000000000001px"><span><u>Sélectionnez</u> <u>dans</u> la <u>liste</u> : <u>Encaissé</u> / En <u>attente</u> / <u>Partiel</u> / <u>Annulé.</u></span></div>
<div class="t lab" style="left:41.3px;top:556.9px"><span>Observations</span></div>
<div class="t desc" style="left:175px;top:556.9px"><span>Champ <u>libre</u> : notes, <u>référence</u> dossier, rappel, <u>acompte</u> <u>reçu,</u> etc.</span></div>
<div class="t lab" style="left:41.3px;top:600.35px"><span><u>Sauvegarde</u></span></div>
<div class="t desc" style="left:175px;top:600.35px"><span><u>Enregistrez</u> <u>ce</u> <u>fichier</u> <u>après</u> <u>chaque</u> <u>saisie.</u> <u>Conservez</u> <u>une</u> <u>copie</u> <u>mensuelle.</u></span></div>
<div class="t lab" style="left:41.3px;top:616.95px"><span><u>Numérotation</u></span></div>
<div class="t desc" style="left:175px;top:616.95px"><span>Ne <u>supprimez</u> <u>jamais</u> <u>une</u> <u>ligne</u> <u>existante</u> : <u>annulez</u> <u>avec</u> <u>le</u> <u>statut</u> <u>&#39;Annulé&#39;.</u></span></div>
<div class="t lab" style="left:41.3px;top:633.35px"><span></span></div>
<div class="t desc" style="left:175px;top:633.35px"><span></span></div>
<div class="a" style="left:22px;top:113.6px;width:18.6px;height:38.900000000000006px;border-bottom:1px solid #3a7fd5"></div>
<div class="a" style="left:38.3px;top:149.7px;width:4.8px;height:4.8px;background:#2f6bbf;border:1px solid #6aa6ee"></div>
<svg class="a" style="left:0;top:0" width="1200" height="100" viewBox="0 0 1200 100"><path d="M7.5 23.5h7.5l3 3v10h-10.5z" fill="#fff" stroke="#4fa56c" stroke-width=".9"/><path d="M15 23.5v3h3" fill="none" stroke="#4fa56c" stroke-width=".9"/><rect x="8" y="28.5" width="9.5" height="4.5" fill="#6dbb88"/><rect x="8" y="30" width="10" height="0.8" fill="#fff" opacity=".6"/><rect x="12.5" y="28" width="0.8" height="5" fill="#fff" opacity=".6"/><path d="M25 30h5l-2.5 3z" fill="#2a2a2a"/><path d="M34.5 25h5l1.5 1.5h7v10h-13.5z" fill="#f6d48e" stroke="#e9a456"/><path d="M34.5 36.5l2-7h13l-2 7z" fill="#f9dc9a" stroke="#e9a456" stroke-linejoin="round"/><path d="M54.5 30h5l-2.5 3z" fill="#2a2a2a"/><rect x="64.5" y="23.5" width="13.5" height="13.5" rx="1" fill="#db8ae4" stroke="#c86fd6" stroke-width=".9"/><rect x="67" y="24.2" width="8.5" height="4.5" fill="#fff"/><rect x="68" y="31.5" width="6.5" height="5.5" fill="#fff"/><rect x="69" y="32.5" width="1.5" height="4" fill="#c05fcf"/><path d="M84 30h5l-2.5 3z" fill="#2a2a2a"/><rect x="93.5" y="21" width="1" height="18" fill="#e5e4e3"/><path d="M101.5 24.5h7l3 3v10h-10z" fill="#fff" stroke="#555"/><path d="M108.5 24.5v3h3" fill="none" stroke="#555"/><path d="M106.5 30l-1 5M104 35.5l4.5-2.5M106 33l4 2.5" stroke="#e23d3d" stroke-width="1.2" fill="none"/><rect x="125" y="24.5" width="8" height="4" fill="#fff" stroke="#3b8fd9"/><rect x="122" y="28.5" width="14" height="6" rx="1.2" fill="#5a5a5a"/><rect x="124.5" y="33" width="9" height="3.5" fill="#fff" stroke="#5a5a5a"/><path d="M145.5 24.5h7l3 3v10h-10z" fill="#fff" stroke="#555"/><path d="M152.5 24.5v3h3" fill="none" stroke="#555"/><circle cx="151.5" cy="33" r="2.5" fill="none" stroke="#3b8fd9" stroke-width="1.2"/><path d="M153.5 35l2.5 2.5" stroke="#3b8fd9" stroke-width="1.3"/><rect x="164.5" y="21" width="1" height="18" fill="#e5e4e3"/><path d="M174 23.5l7.5 9M182 23.5l-7.5 9" stroke="#333" stroke-width="1.1" fill="none"/><circle cx="174.5" cy="34.3" r="2.2" fill="none" stroke="#3b8fd9" stroke-width="1.1"/><circle cx="181.8" cy="34.3" r="2.2" fill="none" stroke="#3b8fd9" stroke-width="1.1"/><path d="M193.5 23.5h5l2 2v8h-7z" fill="#fff" stroke="#555"/><path d="M198.5 27.5h5.5l2.5 2.5v7h-8z" fill="#fff" stroke="#555"/><path d="M195 27.5h3.5M195 29.5h3.5M200.3 31.5h4.5M200.3 33.5h4.5" stroke="#3b8fd9" stroke-width="0.8"/><rect x="215.5" y="25" width="9" height="11" rx="1" fill="#d6d6d6" stroke="#c4c4c4"/><rect x="218" y="23.5" width="4" height="2.5" fill="#c4c4c4"/><path d="M220.5 29.5h4.5l2 2v6h-6.5z" fill="#e8e8e8" stroke="#c4c4c4"/><path d="M234.3 30h5l-2.5 3z" fill="#b9b9b9"/><rect x="243.5" y="21" width="1" height="18" fill="#e5e4e3"/><rect x="255" y="23" width="2.2" height="6" rx="1" fill="#fff" stroke="#666" stroke-width="0.9"/><path d="M252 29.5h8.5v3h-8.5z" fill="#fff" stroke="#666" stroke-width="0.9"/><path d="M251.5 32.5h9.5v4h-9.5z" fill="#f2b25c" stroke="#d99a47" stroke-width="0.8"/><path d="M252 35h9" stroke="#fbe0b0" stroke-width="0.8"/><path d="M272.5 34l3.5-10h1.5l2 7" fill="none" stroke="#333" stroke-width="1.1"/><path d="M273.5 30.5h4" stroke="#333"/><path d="M272 36h6" stroke="#3b8fd9"/><path d="M278 34l4.5-4 2.5 2.5-4.5 4z" fill="#e0363f"/><rect x="292.5" y="21" width="1" height="18" fill="#e5e4e3"/><path d="M300 28l2.5-3.5M300 28l3.8 1.5M300.5 28c3-3 8.5-2.5 9.5 1.5c1 4-2 6.5-5 7.5" fill="none" stroke="#c4c4c4" stroke-width="1.1"/><path d="M317.5 30.5h5l-2.5 3z" fill="#c0c0c0"/><path d="M339 28l-2.5-3.5M339 28l-3.8 1.5M338.5 28c-3-3-8.5-2.5-9.5 1.5c-1 4 2 6.5 5 7.5" fill="none" stroke="#c4c4c4" stroke-width="1.1"/><path d="M347.5 30.5h5l-2.5 3z" fill="#c0c0c0"/><rect x="355.5" y="21" width="1" height="18" fill="#e5e4e3"/><circle cx="371.8" cy="28.3" r="4.8" fill="#fff" stroke="#444" stroke-width="1.1"/><path d="M368.3 31.8l-4.8 4.8" stroke="#333" stroke-width="1.7"/><text x="369.3" y="31" font-size="7.5" fill="#3b8fd9" font-family="Liberation Sans">a</text><text x="372.8" y="38" font-size="8.5" fill="#444" font-family="Liberation Sans">d</text><text x="383.3" y="30.3" font-size="8.6" fill="#555" font-family="Liberation Sans">abc</text><path d="M389 34l2.5 2.5 5.5-5" fill="none" stroke="#3fae6a" stroke-width="1.3"/><rect x="405" y="21" width="1" height="18" fill="#e5e4e3"/><rect x="411.5" y="23.5" width="13" height="13" fill="#fff" stroke="#4d4d4d"/><path d="M411 26.75h14" stroke="#4d4d4d" stroke-width="0.8"/><path d="M411 30.00h14" stroke="#4d4d4d" stroke-width="0.8"/><path d="M411 33.25h14" stroke="#4d4d4d" stroke-width="0.8"/><path d="M414.75 23v14" stroke="#4d4d4d" stroke-width="0.8"/><path d="M418.00 23v14" stroke="#4d4d4d" stroke-width="0.8"/><path d="M421.25 23v14" stroke="#4d4d4d" stroke-width="0.8"/><rect x="411.5" y="26.5" width="13" height="3.4" fill="#52a2ea" opacity=".9"/><path d="M430.5 30h5l-2.5 3z" fill="#2a2a2a"/><rect x="440.5" y="23.5" width="13" height="13" fill="#fff" stroke="#4d4d4d"/><path d="M440 26.75h14" stroke="#4d4d4d" stroke-width="0.8"/><path d="M440 30.00h14" stroke="#4d4d4d" stroke-width="0.8"/><path d="M440 33.25h14" stroke="#4d4d4d" stroke-width="0.8"/><path d="M443.75 23v14" stroke="#4d4d4d" stroke-width="0.8"/><path d="M447.00 23v14" stroke="#4d4d4d" stroke-width="0.8"/><path d="M450.25 23v14" stroke="#4d4d4d" stroke-width="0.8"/><rect x="443.6" y="23.5" width="3.4" height="13" fill="#52a2ea" opacity=".9"/><path d="M460 30h5l-2.5 3z" fill="#2a2a2a"/><rect x="468" y="21" width="1" height="18" fill="#e5e4e3"/><rect x="474.5" y="23.5" width="15" height="13.5" fill="#fff" stroke="#555"/><rect x="474.5" y="23.5" width="15" height="1.8" fill="#555"/><path d="M482 25v12" stroke="#555" stroke-width="0.8"/><text x="475.6" y="30.8" font-size="7" fill="#3b8fd9" font-family="Liberation Sans">A</text><text x="476" y="36.6" font-size="7" fill="#c05fcf" font-family="Liberation Sans">Z</text><text x="483.2" y="30.8" font-size="7" fill="#c05fcf" font-family="Liberation Sans">Z</text><text x="482.9" y="36.6" font-size="7" fill="#3b8fd9" font-family="Liberation Sans">A</text><text x="496.8" y="29.8" font-size="8.2" fill="#3b8fd9" font-family="Liberation Sans">A</text><text x="497.3" y="37.6" font-size="8.2" fill="#c05fcf" font-family="Liberation Sans">Z</text><path d="M509 24.5v11.5M506 33l3 3.3 3-3.3" fill="none" stroke="#555" stroke-width="1.1"/><text x="519.6" y="29.8" font-size="8.2" fill="#c05fcf" font-family="Liberation Sans">Z</text><text x="519.2" y="37.6" font-size="8.2" fill="#3b8fd9" font-family="Liberation Sans">A</text><path d="M531 24.5v11.5M528 33l3 3.3 3-3.3" fill="none" stroke="#555" stroke-width="1.1"/><path d="M542.5 24h12.5l-4.8 6.5v4.5l-2.8 1.8v-6.3z" fill="#fff" stroke="#555" stroke-linejoin="round"/><path d="M553 29l-3 4h2.5l-2 4 4.5-5h-2.5l2-3z" fill="#f0a030"/><rect x="562.5" y="21" width="1" height="18" fill="#e5e4e3"/><rect x="569.5" y="23.5" width="13" height="13" fill="#fff" stroke="#444"/><circle cx="572.8" cy="27" r="1.3" fill="#f0a030"/><path d="M570 36l4-5 2.5 2.5 2.5-3 3.5 3.5v2z" fill="#4e9be6"/><rect x="590.5" y="27" width="3" height="10" fill="#52a2ea" stroke="#3b8fd9" stroke-width=".6"/><rect x="595.3" y="23.2" width="3" height="13.8" fill="#f6c66f" stroke="#e9a456" stroke-width=".6"/><rect x="600.3" y="29.5" width="3" height="7.5" fill="#666"/><rect x="613.5" y="23.5" width="12.5" height="13" fill="#fff" stroke="#555"/><path d="M614 26.5h12M616.5 24v13" stroke="#aaa" stroke-width="0.8"/><path d="M618.5 34.5c0-3 3-5 5.5-5.3M622 27.5l2 1.7-1.5 2M617 32.5l1.5 2 2-1.5" fill="none" stroke="#3b8fd9" stroke-width="1"/><rect x="633.5" y="21" width="1" height="18" fill="#e5e4e3"/><text x="638.2" y="37" font-size="16" fill="#555" font-family="Liberation Sans">&#937;</text><path d="M658.3 30h5l-2.5 3z" fill="#2a2a2a"/><circle cx="676" cy="28.5" r="5" fill="none" stroke="#555" stroke-width="1"/><ellipse cx="676" cy="28.5" rx="2" ry="5" fill="none" stroke="#555" stroke-width=".9"/><path d="M671 28.5h10M671.8 26h8.4M671.8 31h8.4" stroke="#555" stroke-width=".8"/><rect x="669.5" y="33" width="7" height="3.5" rx="1.7" fill="#f5f4f3" stroke="#3b8fd9" stroke-width="1.1"/><rect x="675.5" y="33" width="7" height="3.5" rx="1.7" fill="none" stroke="#3b8fd9" stroke-width="1.1"/><path d="M691.5 24.5h13v9h-8l-3 3v-3h-2z" fill="#fff" stroke="#444" stroke-linejoin="round"/><path d="M714.5 24h7.5l3 3v10.5h-10.5z" fill="#e2e2e2" stroke="#cfcfcf"/><rect x="734" y="21" width="1" height="18" fill="#e5e4e3"/><rect x="740.5" y="23.5" width="13" height="11" fill="#fff" stroke="#4d4d4d"/><path d="M740 26.25h14" stroke="#4d4d4d" stroke-width="0.8"/><path d="M740 29.00h14" stroke="#4d4d4d" stroke-width="0.8"/><path d="M740 31.75h14" stroke="#4d4d4d" stroke-width="0.8"/><path d="M744.83 23v12" stroke="#4d4d4d" stroke-width="0.8"/><path d="M749.17 23v12" stroke="#4d4d4d" stroke-width="0.8"/><rect x="740.5" y="23.5" width="13" height="3" fill="#52a2ea"/><rect x="746" y="31" width="9" height="5" rx="1.5" fill="#666"/><rect x="747.5" y="29.5" width="6" height="2" fill="#fff" stroke="#666" stroke-width=".6"/><rect x="761.5" y="23.5" width="13" height="13" fill="#fff" stroke="#4d4d4d"/><path d="M761 26.75h14" stroke="#4d4d4d" stroke-width="0.8"/><path d="M761 30.00h14" stroke="#4d4d4d" stroke-width="0.8"/><path d="M761 33.25h14" stroke="#4d4d4d" stroke-width="0.8"/><path d="M765.83 23v14" stroke="#4d4d4d" stroke-width="0.8"/><path d="M770.17 23v14" stroke="#4d4d4d" stroke-width="0.8"/><rect x="761.5" y="23.5" width="13" height="3.3" fill="#3b8fd9"/><rect x="761.5" y="23.5" width="4.2" height="13" fill="#3b8fd9"/><path d="M763.5 24v12" stroke="#fff" stroke-width=".5"/><path d="M781.2 30h5l-2.5 3z" fill="#2a2a2a"/><rect x="791.5" y="23.5" width="14" height="13.5" fill="#fff" stroke="#555"/><rect x="791.5" y="23.5" width="14" height="2" fill="#555"/><path d="M791.5 30.5h14" stroke="#3b8fd9" stroke-dasharray="2 1.2"/><rect x="812.5" y="21" width="1" height="18" fill="#e5e4e3"/><circle cx="829" cy="27" r="4" fill="#fff" stroke="#555"/><path d="M819.5 30h7.5v7h-7.5z" fill="#fff" stroke="#555"/><path d="M828 28.5l4.5 4.5-4.5 4.5-4.5-4.5z" fill="#fff" stroke="#555"/><rect x="215.5" y="46" width="1" height="22" fill="#e5e4e3"/><text x="224" y="62" font-size="12" font-weight="bold" fill="#333" font-family="Liberation Sans">B</text><path d="M250 52.6h5M247.6 62h5M253 52.6l-2.6 9.4" fill="none" stroke="#444" stroke-width="1"/><text x="267.5" y="61.5" font-size="11" fill="#444" font-family="Liberation Sans">U</text><rect x="268" y="63" width="7.5" height="1" fill="#6aaaf0"/><path d="M285 57h5l-2.5 3z" fill="#2a2a2a"/><rect x="294.5" y="46" width="1" height="22" fill="#e5e4e3"/><path d="M302.3 60.3l3.7-8.3h0.8l3.7 8.3M303.8 57.3h5.2" fill="none" stroke="#333" stroke-width="1.05"/><rect x="298" y="61.5" width="16.5" height="3.6" fill="#c62828"/><path d="M320 57h5l-2.5 3z" fill="#2a2a2a"/><path d="M331 52l4-3 4 6-3.5 3-3.5-1z" fill="#fff" stroke="#555" stroke-width=".9"/><path d="M329.5 55v-3.5h3.5" fill="none" stroke="#3b8fd9" stroke-width="1.2"/><rect x="327.5" y="61.5" width="17" height="3.6" fill="#f6ef1b"/><path d="M348.7 57h5l-2.5 3z" fill="#2a2a2a"/><rect x="357.5" y="46" width="1" height="22" fill="#e5e4e3"/><rect x="365.6" y="49.6" width="12" height="1.1" fill="#555"/><rect x="365.6" y="52.1" width="6.5" height="1.1" fill="#555"/><rect x="365.6" y="55.5" width="12" height="1.1" fill="#555"/><rect x="365.6" y="57.75" width="6.5" height="1.1" fill="#555"/><rect x="365.6" y="60.9" width="12" height="1.1" fill="#555"/><rect x="365.6" y="63.0" width="6.5" height="1.1" fill="#555"/><rect x="387.7" y="49.6" width="12" height="1.1" fill="#555"/><rect x="390.7" y="52.1" width="6" height="1.1" fill="#555"/><rect x="387.7" y="55.5" width="12" height="1.1" fill="#555"/><rect x="390.7" y="57.75" width="6" height="1.1" fill="#555"/><rect x="387.7" y="60.9" width="12" height="1.1" fill="#555"/><rect x="390.7" y="63.0" width="6" height="1.1" fill="#555"/><rect x="409.4" y="49.6" width="12" height="1.1" fill="#555"/><rect x="414.9" y="52.1" width="6.5" height="1.1" fill="#555"/><rect x="409.4" y="55.5" width="12" height="1.1" fill="#555"/><rect x="414.9" y="57.75" width="6.5" height="1.1" fill="#555"/><rect x="409.4" y="60.9" width="12" height="1.1" fill="#555"/><rect x="414.9" y="63.0" width="6.5" height="1.1" fill="#555"/><rect x="429" y="46" width="1" height="22" fill="#e5e4e3"/><rect x="437" y="49.6" width="11.5" height="1.1" fill="#555"/><rect x="437" y="52.1" width="6.5" height="1.1" fill="#555"/><rect x="437" y="55.5" width="11.5" height="1.1" fill="#555"/><path d="M442.7 64v-6.5M440.2 60l2.5-2.5 2.5 2.5" fill="none" stroke="#3b8fd9" stroke-width="1.1"/><rect x="459.5" y="55.5" width="11.5" height="1.1" fill="#555"/><rect x="459.5" y="57.8" width="6.5" height="1.1" fill="#555"/><path d="M465.2 49v5.5M462.7 52l2.5 2.5 2.5-2.5M465.2 65v-5.5M462.7 62l2.5-2.5 2.5 2.5" fill="none" stroke="#3b8fd9" stroke-width="1.1"/><rect x="475.6" y="45.1" width="21.3" height="23.8" rx="3" fill="#d5d3d1"/><rect x="480.5" y="57.75" width="6.5" height="1.1" fill="#555"/><rect x="480.5" y="60.9" width="11.5" height="1.1" fill="#555"/><rect x="480.5" y="63.0" width="6.5" height="1.1" fill="#555"/><path d="M486.2 49v6M483.7 52.5l2.5 2.5 2.5-2.5" fill="none" stroke="#3b8fd9" stroke-width="1.1"/><rect x="500.5" y="46" width="1" height="22" fill="#e5e4e3"/><rect x="508" y="49.6" width="12.5" height="1.1" fill="#555"/><rect x="508" y="52.1" width="6.5" height="1.1" fill="#555"/><rect x="508" y="55.5" width="8.5" height="1.1" fill="#555"/><rect x="508" y="57.75" width="5" height="1.1" fill="#555"/><rect x="508" y="63.0" width="12.5" height="1.1" fill="#555"/><path d="M514 58.3h5.5c1.5 0 1.5 3 0 3.3M517.5 60l2 1.7-2 1.3" fill="none" stroke="#3b8fd9" stroke-width="1.1"/><rect x="527.5" y="46" width="1" height="22" fill="#e5e4e3"/><rect x="534.9" y="50.5" width="13" height="13" fill="#e4e4e4" stroke="#c8c8c8"/><path d="M534.4 54h14M534.4 60h14M538.9 50v4M543.9 50v4M538.9 60v4M543.9 60v4" stroke="#c8c8c8" stroke-width=".8"/><rect x="556.8" y="50.5" width="13" height="13" fill="#e4e4e4" stroke="#c8c8c8"/><path d="M556.3 54h14M556.3 60h14M560.8 50v4M565.8 50v4M560.8 60v4M565.8 60v4" stroke="#c8c8c8" stroke-width=".8"/><rect x="578.5" y="50.5" width="13" height="13" fill="#e4e4e4" stroke="#c8c8c8"/><path d="M578 54h14M578 60h14M582.5 50v4M587.5 50v4M582.5 60v4M587.5 60v4" stroke="#c8c8c8" stroke-width=".8"/><path d="M582.5 54v6M587.5 54v6" stroke="#c8c8c8" stroke-width=".8"/><rect x="598.7" y="46" width="1" height="22" fill="#e5e4e3"/><rect x="603.5" y="53" width="14" height="8.5" fill="#fff" stroke="#444"/><circle cx="610.5" cy="57" r="1.8" fill="#444"/><rect x="607" y="59" width="3" height="4" rx="1" fill="#fff" stroke="#444" stroke-width=".8"/><rect x="610.5" y="58.5" width="3" height="4.5" rx="1" fill="#fff" stroke="#444" stroke-width=".8"/><rect x="614" y="57.5" width="3" height="5.5" rx="1" fill="#fff" stroke="#444" stroke-width=".8"/><path d="M623.7 57h5l-2.5 3z" fill="#2a2a2a"/><text x="635.5" y="63.2" font-size="16" fill="#555" font-family="Liberation Sans" transform="translate(635.5 0) scale(0.86 1) translate(-635.5 0)">%</text><text x="655" y="62.6" font-size="14.5" fill="#555" font-family="Liberation Sans" letter-spacing="-2.2" transform="translate(655 0) scale(0.96 1) translate(-655 0)">0.0</text><rect x="679.5" y="51.5" width="12.5" height="12" fill="#fff" stroke="#555"/><rect x="679.5" y="51.5" width="12.5" height="1.8" fill="#555"/><path d="M682 50v2.5M689.5 50v2.5" stroke="#555"/><text x="682.5" y="62.3" font-size="8.5" fill="#555" font-family="Liberation Sans">7</text><rect x="699" y="46" width="1" height="22" fill="#e5e4e3"/><text x="703.5" y="62.6" font-size="14.5" fill="#555" font-family="Liberation Sans" letter-spacing="-2.1" transform="translate(703.5 0) scale(0.98 1) translate(-703.5 0)">.00</text><path d="M716.5 61v6M713.5 64h6" stroke="#3b8fd9" stroke-width="1.1"/><text x="725.5" y="62.6" font-size="14.5" fill="#555" font-family="Liberation Sans" letter-spacing="-2.1" transform="translate(725.5 0) scale(0.98 1) translate(-725.5 0)">.00</text><path d="M735.5 60.5l5 5M740.5 60.5l-5 5" stroke="#e23d3d" stroke-width="1.1"/><rect x="748" y="46" width="1" height="22" fill="#e5e4e3"/><rect x="755.4" y="49.0" width="14" height="1.1" fill="#555"/><rect x="760.4" y="53.0" width="9" height="1.1" fill="#555"/><rect x="760.4" y="56.0" width="9" height="1.1" fill="#555"/><rect x="760.4" y="59.5" width="9" height="1.1" fill="#555"/><rect x="755.4" y="63.0" width="14" height="1.1" fill="#555"/><path d="M754.5 56.5h5M757.5 54.5l2 2-2 2" fill="none" stroke="#3b8fd9" stroke-width="1.1"/><rect x="776.6" y="49.0" width="14" height="1.1" fill="#555"/><rect x="781.6" y="53.0" width="9" height="1.1" fill="#555"/><rect x="781.6" y="56.0" width="9" height="1.1" fill="#555"/><rect x="781.6" y="59.5" width="9" height="1.1" fill="#555"/><rect x="776.6" y="63.0" width="14" height="1.1" fill="#555"/><path d="M776 56.5h5M778 54.5l-2 2 2 2" fill="none" stroke="#3b8fd9" stroke-width="1.1"/><rect x="797.5" y="46" width="1" height="22" fill="#e5e4e3"/><rect x="803.5" y="51.5" width="12" height="12" fill="#fff" stroke="#555"/><path d="M809.5 51.5v12M803.5 57.5h12" stroke="#555"/><path d="M803.5 63.4h12" stroke="#f0a030"/><path d="M822.7 57h5l-2.5 3z" fill="#2a2a2a"/><rect x="833" y="50.5" width="12" height="1.1" fill="#c9c9c9"/><rect x="833" y="53.0" width="12" height="1.1" fill="#c9c9c9"/><rect x="833" y="56.0" width="12" height="1.1" fill="#c9c9c9"/><rect x="833" y="59.0" width="12" height="1.1" fill="#c9c9c9"/><rect x="833" y="62.0" width="12" height="1.1" fill="#c9c9c9"/><path d="M851.8 57h5l-2.5 3z" fill="#c0c0c0"/><rect x="861.5" y="50.5" width="13" height="10.5" fill="#fff" stroke="#3b8fd9"/><rect x="862.7" y="51.7" width="10.5" height="8" fill="#fff" stroke="#444" stroke-width=".7"/><rect x="860" y="61" width="16" height="4" fill="#2563a8"/><path d="M881 57h5l-2.5 3z" fill="#2a2a2a"/><rect x="890.5" y="46" width="1" height="22" fill="#e5e4e3"/><rect x="896.5" y="50.5" width="11" height="11" fill="#fff" stroke="#555"/><path d="M896 53.25h12" stroke="#555" stroke-width="0.8"/><path d="M896 56.00h12" stroke="#555" stroke-width="0.8"/><path d="M896 58.75h12" stroke="#555" stroke-width="0.8"/><path d="M900.17 50v12" stroke="#555" stroke-width="0.8"/><path d="M903.83 50v12" stroke="#555" stroke-width="0.8"/><rect x="896.5" y="50.5" width="11" height="2.6" fill="#6fcf8a"/><rect x="896.5" y="53.3" width="11" height="2.6" fill="#f28b8b"/><rect x="902.5" y="56.5" width="8" height="8" fill="#fff" stroke="#555"/><path d="M904.5 59.5h4M904.5 61.5h4M907.5 58l-2 5" stroke="#444" stroke-width=".8"/><path d="M915.6 57h5l-2.5 3z" fill="#2a2a2a"/><rect x="927.3" y="45.2" width="21.9" height="24.3" rx="3" fill="#d5d3d1"/><path d="M939.5 53h6M939.5 53v11M942.5 53v11M939.5 53c-3 0-4.5 1.5-4.5 3s1.5 3 4.5 3" fill="none" stroke="#444" stroke-width="1"/><path d="M931.5 62h5M934.5 60l2 2-2 2" fill="none" stroke="#3b8fd9" stroke-width="1.1"/><path d="M955 53h6M958 53v11M958 53c-3 0-4 1.5-4 3s1 3 4 3" fill="none" stroke="#888" stroke-width="1"/><rect x="958" y="53" width="1.6" height="11" fill="#aaa"/><path d="M966.5 61.5h-5M963.5 59.5l-2 2 2 2" fill="none" stroke="#3b8fd9" stroke-width="1"/><rect x="974" y="46" width="1" height="22" fill="#e5e4e3"/><rect x="976.9" y="45.2" width="21.8" height="24.3" rx="3" fill="#d5d3d1"/><text x="980.5" y="59.3" font-size="12" fill="#3b8fd9" font-family="Liberation Sans" transform="translate(980.5 0) scale(0.85 1) translate(-980.5 0)">A</text><path d="M988.5 50.5h5M991.5 49l2 1.5-2 1.5M988.5 54.5h5M991.5 53l2 1.5-2 1.5M981 62.5h13M991.5 60.5l2 2-2 2" fill="none" stroke="#333" stroke-width=".9"/><path d="M1003.5 50v13M1002 61l1.5 2 1.5-2M1008 50v13M1006.5 61l1.5 2 1.5-2M1012.5 56v7M1011 61l1.5 2 1.5-2" fill="none" stroke="#444" stroke-width=".9"/><text x="1008" y="58.5" font-size="11" fill="#3b8fd9" font-family="Liberation Sans" transform="translate(1008 0) scale(0.85 1) translate(-1008 0)">A</text></svg>
<div class="box" style="left:3px;top:45.5px;width:136px;height:23px"></div>
<div class="a" style="left:116px;top:46.5px;width:22px;height:21px;background:#efeeed;border-left:1px solid #dad9d8;border-radius:0 2px 2px 0"></div>
<div class="dd" style="left:124px;top:55.5px;border-left-width:4px;border-right-width:4px;border-top-width:4.5px"></div>
<div class="t" style="left:9.3px;top:52px;font-size:9.8px;font-style:italic;color:#333">Calibri</div>
<div class="box" style="left:146px;top:45.5px;width:66px;height:23px"></div>
<div class="a" style="left:189px;top:46.5px;width:22px;height:21px;background:#efeeed;border-left:1px solid #dad9d8;border-radius:0 2px 2px 0"></div>
<div class="dd" style="left:196.5px;top:55.5px;border-left-width:4px;border-right-width:4px;border-top-width:4.5px"></div>
<div class="t" style="left:151.8px;top:52px;font-size:9.8px;color:#333">11 pt</div>
<div class="a" style="left:0;top:70.5px;width:1161px;height:1px;background:#e4e3e2"></div>
<div class="box" style="left:3px;top:72.4px;width:107px;height:23px"></div>
<div class="a" style="left:86px;top:73.4px;width:23px;height:21px;background:#efeeed;border-left:1px solid #dad9d8;border-radius:0 2px 2px 0"></div>
<div class="dd" style="left:93.5px;top:82px;border-left-width:4px;border-right-width:4px;border-top-width:4.5px"></div>
<div class="t" style="left:8.5px;top:79px;font-size:9.8px;color:#333">A1</div>
<div class="sep" style="left:113px;top:74px;height:20px"></div>
<div class="t" style="left:118.5px;top:77.2px;font-size:13px;font-style:italic;color:#3b8fd9;font-family:'Liberation Serif',serif;letter-spacing:-0.5px">fx</div>
<div class="t" style="left:134.5px;top:77.2px;font-size:13.5px;color:#666;font-family:'Liberation Serif',serif">&#8721;</div>
<div class="dd" style="left:149.5px;top:83.5px;border-left-width:2.5px;border-right-width:2.5px;border-top-width:3px"></div>
<div class="a" style="left:161px;top:81.7px;width:8px;height:1.7px;background:#555"></div><div class="a" style="left:161px;top:85.3px;width:8px;height:1.7px;background:#555"></div>
<div class="a" style="left:173px;top:76px;width:972.5px;height:16.5px;background:#fff;border:1px solid #d4d3d2"></div>
<div class="dd" style="left:1148px;top:82px;border-left-width:4px;border-right-width:4px;border-top-width:4.5px"></div>
<div class="a" style="left:1160.5px;top:71px;width:1px;height:30px;background:#dcdbda"></div>
<div class="a" style="left:1152px;top:101px;width:9px;height:531px;background:#cfcfce"></div>
<div class="a" style="left:1152.5px;top:101px;width:8px;height:2.5px;background:#8a8a8a"></div>
<div class="a" style="left:1153.6px;top:105.5px;width:5.4px;height:240px;background:#8c8c8c;border-radius:3px"></div>
<div class="a" style="left:1161px;top:338.8px;width:4.2px;height:50px;background:#8f8f8f"></div>
<div class="a" style="left:1162px;top:362px;width:0;height:0;border-top:2px solid transparent;border-bottom:2px solid transparent;border-left:2.5px solid #fff"></div>
<svg class="a" style="left:0;top:0" width="1200" height="260"><path d="M1176.5 81h9.5M1176.5 84.5h9.5M1176.5 88h9.5" stroke="#333" stroke-width="1.5"/><rect x="1175.2" y="108.4" width="12.5" height="12.5" fill="#fff" stroke="#444"/><rect x="1175.2" y="108.4" width="12.5" height="2" fill="#444"/><path d="M1177 114.5h9M1177 117.5h9" stroke="#3b8fd9" stroke-width=".9"/><path d="M1180 113v3M1183 116v3" stroke="#444" stroke-width=".9"/><text x="1173.5" y="143" font-size="12.5" fill="#333" font-family="Liberation Sans">A</text><path d="M1184.5 141l5-5.5" stroke="#444" stroke-width="1.2"/><path d="M1181.5 144.5c0-2 1-3.5 3-3.5c1 0 1.5 1 1 2c-.8 1.3-2.5 1.5-4 1.5z" fill="#3b8fd9"/><path d="M1173.5 168h5l1.5 1.5h6v9.5h-12.5z" fill="#f6d48e" stroke="#e9a456"/><rect x="1180" y="172" width="9.5" height="8" fill="#fff" stroke="#2563a8"/><path d="M1180.5 179.5l3-3.5 2 2 1.5-1.5 2.5 3z" fill="#3b8fd9"/><circle cx="1181" cy="202" r="6.3" fill="#fff" stroke="#444" stroke-width="1.1"/><path d="M1178 205l1.5-4.5 4.5-1.5-1.5 4.5z" fill="#3b8fd9"/><text x="1174.5" y="236.5" font-size="16" font-style="italic" fill="#3b8fd9" font-family="Liberation Serif" letter-spacing="-0.3">fx</text></svg>
<div class="a" style="left:0;top:631.7px;width:1152px;height:9.8px;background:#cfcfce"></div>
<div class="a" style="left:2px;top:634px;width:541px;height:5.7px;background:#8a8a8a;border-radius:3px"></div>
<div class="a" style="left:1148.5px;top:633px;width:1.3px;height:7px;background:#777"></div>
<div class="a" style="left:1161px;top:632px;width:1px;height:26px;background:#dcdbda"></div>
<div class="a" style="left:0;top:641px;width:1161px;height:17px;background:#f5f4f3"></div>
<svg class="a" style="left:0;top:641px" width="90" height="17"><path d="M7 3.5v11M17 3.5l-6 5.5 6 5.5M13.5 6l-2.5 3 2.5 3M28 4.5l-6.5 4.5 6.5 4.5zM35 4.5l-6.5 4.5 6.5 4.5zM37.5 4.5l6.5 4.5-6.5 4.5zM44.5 4.5l6.5 4.5-6.5 4.5zM53.5 3.5l6 5.5-6 5.5M57 6l2.5 3-2.5 3M64.5 3.5v11" fill="none" stroke="#d9d8d7" stroke-width="2.4" stroke-linejoin="round"/><path d="M7 3.5v11M17 3.5l-6 5.5 6 5.5M13.5 6l-2.5 3 2.5 3M28 4.5l-6.5 4.5 6.5 4.5zM35 4.5l-6.5 4.5 6.5 4.5zM37.5 4.5l6.5 4.5-6.5 4.5zM44.5 4.5l6.5 4.5-6.5 4.5zM53.5 3.5l6 5.5-6 5.5M57 6l2.5 3-2.5 3M64.5 3.5v11" fill="none" stroke="#f7f7f6" stroke-width="0.9" stroke-linejoin="round"/></svg>
<div class="a" style="left:75px;top:642.5px;width:9px;height:15px;background:#fff"></div>
<div class="a" style="left:82px;top:646.8px;width:5.5px;height:5.5px;border-radius:50%;background:#5a9ad6"></div><div class="a" style="left:83.5px;top:649.2px;width:2.5px;height:0.8px;background:#fff"></div><div class="a" style="left:84.35px;top:648.3px;width:0.8px;height:2.5px;background:#fff"></div>
<div class="a" style="left:92px;top:641.8px;width:85.30000000000001px;height:15.7px;background:#1e3a8a"></div>
<div class="t" style="left:92px;width:85.30000000000001px;top:645.3px;text-align:center;font-size:9.2px;color:#e8eefc"><span style="display:inline-block;transform:scaleX(0.9)">Registre Recettes</span></div>
<div class="a" style="left:177.3px;top:641.8px;width:81.19999999999999px;height:15.7px;background:#3b82f6"></div>
<div class="t" style="left:177.3px;width:81.19999999999999px;top:645.3px;text-align:center;font-size:9.2px;color:#eaf2ff"><span style="display:inline-block;transform:scaleX(0.9)">Tableau de Bord</span></div>
<div class="a" style="left:258.5px;top:641.8px;width:76.5px;height:15.7px;background:#10b981"></div>
<div class="t" style="left:258.5px;width:76.5px;top:645.3px;text-align:center;font-size:9.2px;color:#e6fbf2"><span style="display:inline-block;transform:scaleX(0.9)">Analyse Statuts</span></div>
<div class="a" style="left:335px;top:641.8px;width:66px;height:16.1px;background:#fff;border-bottom:2px solid #e9a03a"></div>
<div class="t" style="left:335px;width:66px;top:645.3px;text-align:center;font-size:9.2px;font-weight:bold;color:#222"><span style="display:inline-block;transform:scaleX(0.88)">Instructions</span></div>
<div class="a" style="left:0;top:658px;width:1200px;height:17px;background:#f5f4f3;border-top:1px solid #dedddc"></div>
<div class="a" style="left:174.6px;top:660px;width:1px;height:15px;background:#dedddc"></div>
<div class="a" style="left:393px;top:660px;width:1px;height:15px;background:#dedddc"></div>
<div class="a" style="left:612px;top:660px;width:1px;height:15px;background:#dedddc"></div>
<div class="a" style="left:777px;top:660px;width:1px;height:15px;background:#dedddc"></div>
<div class="a" style="left:822.5px;top:660px;width:1px;height:15px;background:#dedddc"></div>
<div class="a" style="left:852.5px;top:660px;width:1px;height:15px;background:#dedddc"></div>
<div class="a" style="left:872.5px;top:660px;width:1px;height:15px;background:#dedddc"></div>
<div class="a" style="left:892.5px;top:660px;width:1px;height:15px;background:#dedddc"></div>
<div class="a" style="left:1071px;top:660px;width:1px;height:15px;background:#dedddc"></div>
<div class="a" style="left:1167.5px;top:660px;width:1px;height:15px;background:#dedddc"></div>
<svg class="a" style="left:0;top:658px" width="30" height="17"><rect x="6.5" y="3.5" width="10" height="10" rx="1" fill="none" stroke="#999"/><rect x="8.5" y="3.5" width="6" height="3" fill="none" stroke="#999" stroke-width=".8"/><rect x="8.5" y="9" width="6" height="4.5" fill="none" stroke="#999" stroke-width=".8"/></svg>
<div class="t" style="left:27.5px;font-size:9px;color:#333;top:662.3px;transform:scaleX(0.92);transform-origin:0 0">Sheet 4 of 4</div>
<div class="t" style="left:399px;font-size:9px;color:#333;top:662.3px;transform:scaleX(0.92);transform-origin:0 0">PageStyle_Instructions</div>
<div class="t" style="left:670px;font-size:9px;color:#333;top:662.3px;transform:scaleX(0.92);transform-origin:0 0">English (USA)</div>
<svg class="a" style="left:820px;top:658px" width="40" height="17"><rect x="9.5" y="5.5" width="10" height="6" fill="none" stroke="#3b8fd9"/><path d="M24.5 4v10M23 4h3M23 14h3" stroke="#444" stroke-width=".9"/></svg>
<div class="t" style="left:951px;font-size:9px;color:#333;top:662.3px;transform:scaleX(0.92);transform-origin:0 0">Average: ; Sum: 0</div>
<svg class="a" style="left:1070px;top:658px" width="130" height="17"><path d="M7 9h7M85 9h7M88.5 5.5v7" stroke="#333" stroke-width="1.2"/><path d="M18 9h64" stroke="#aaa" stroke-width="1"/><rect x="48.5" y="5.5" width="2.5" height="7" fill="#fff" stroke="#444" stroke-width=".8"/></svg>
<div class="t" style="left:1173px;font-size:9px;color:#333;top:662.3px;transform:scaleX(0.92);transform-origin:0 0">100%</div>
</body></html>
